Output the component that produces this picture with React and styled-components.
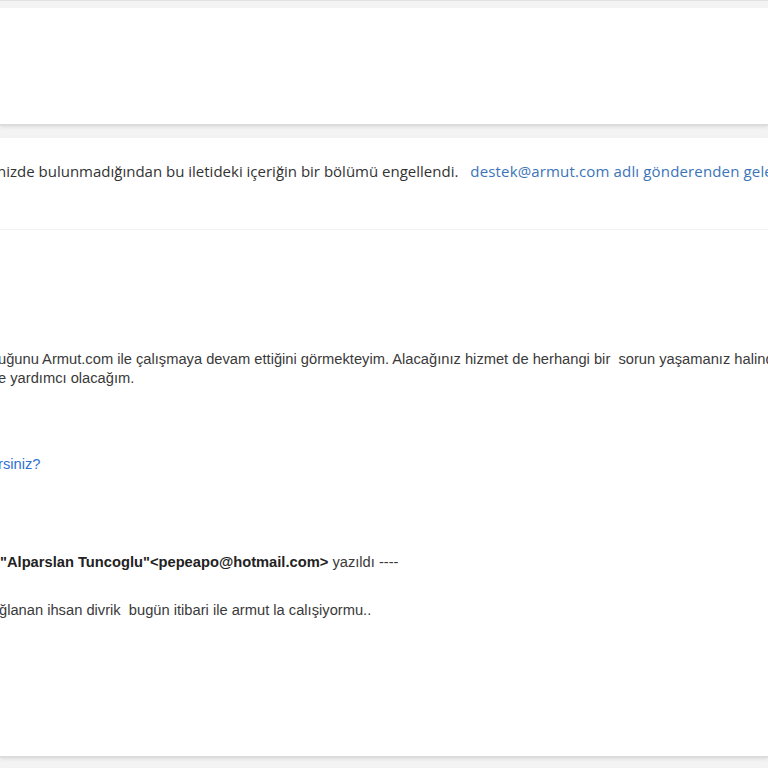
import React from 'react'
import styled, { createGlobalStyle } from 'styled-components'

const Global = createGlobalStyle`
  html, body {
    margin: 0;
    padding: 0;
    background: #f4f4f4;
    overflow: hidden;
  }
`

const Page = styled.div`
  width: 768px;
  height: 768px;
  overflow: hidden;
  background: #f3f3f3;
  border-top: 1px solid #e2e2e2;
  box-sizing: border-box;
  padding-top: 7px;
`

const Panel = styled.div`
  background: #fff;
  height: ${p => p.h}px;
  border-bottom: 2px solid #dcdcdc;
  box-shadow: 0 2px 3px rgba(0, 0, 0, 0.06);
  margin-bottom: ${p => p.gap || 0}px;
`

const Banner = styled.div`
  height: 92px;
  box-sizing: border-box;
  padding-top: 23px;
  border-bottom: 1px solid #f2f2f2;
  white-space: nowrap;
  overflow: hidden;
  font-family: "Open Sans", "Noto Sans", sans-serif;
  font-size: 15px;
  color: #333;
`

const Shift = styled.div`
  margin-left: ${p => p.x}px;
`

const Sender = styled.span`
  color: #3b74b8;
  margin-left: 12px;
  letter-spacing: 0.15px;
`

const Body = styled.div`
  padding-top: 120px;
  white-space: nowrap;
  overflow: hidden;
  font-family: "Liberation Sans", Arial, sans-serif;
  font-size: 14.7px;
  line-height: 19px;
  color: #3a3a3a;
`

const Para = styled.div`
  margin-bottom: ${p => p.mb || 0}px;
`

const Link = styled.span`
  color: #2e72d2;
`

const Quote = styled.span`
  color: #222;
  font-weight: bold;
`

export default function App() {
  return (
    <>
      <Global />
      <Page>
        <Panel h={116} gap={12} />
        <Panel h={618}>
          <Banner>
            <Shift x={-3}>
              nizde bulunmadığından bu iletideki içeriğin bir bölümü engellendi.
              <Sender>destek@armut.com adlı gönderenden gelen içeriği her zaman göster</Sender>
            </Shift>
          </Banner>
          <Body>
            <Para mb={67}>
              <Shift x={-2}>
                uğunu Armut.com ile çalışmaya devam ettiğini görmekteyim. Alacağınız hizmet de herhangi bir&nbsp; sorun yaşamanız halinde
              </Shift>
              <Shift x={-2}>e yardımcı olacağım.</Shift>
            </Para>
            <Para mb={79}>
              <Shift x={-2}><Link>rsiniz?</Link></Shift>
            </Para>
            <Para mb={29}>
              <Shift x={0}><Quote>"Alparslan Tuncoglu"&lt;pepeapo@hotmail.com&gt;</Quote> yazıldı ----</Shift>
            </Para>
            <Para>
              <Shift x={-1}>ğlanan ihsan divrik&nbsp; bugün itibari ile armut la calışiyormu..</Shift>
            </Para>
          </Body>
        </Panel>
      </Page>
    </>
  )
}
